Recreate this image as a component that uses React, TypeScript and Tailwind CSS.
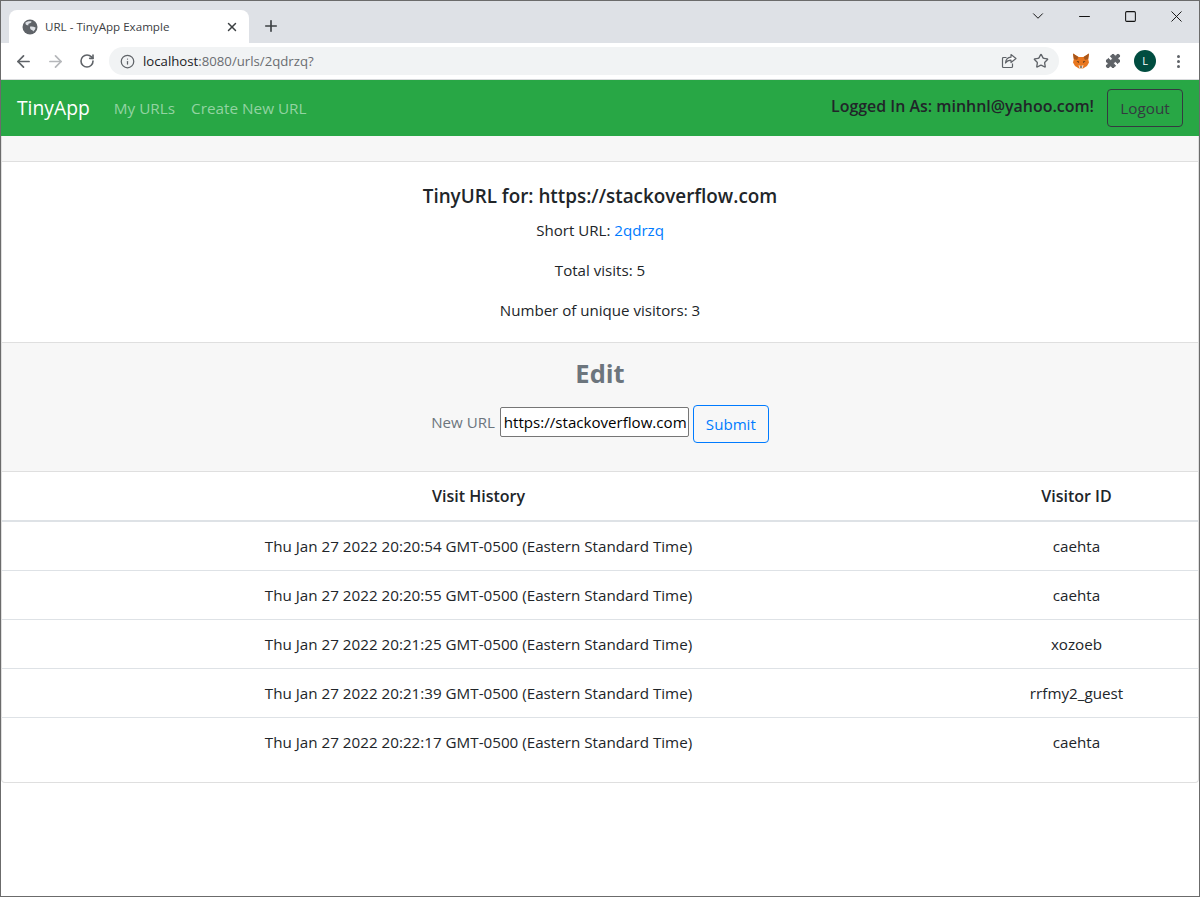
import { ArrowLeft, ArrowRight, RotateCw, Info, Star, X, Plus, ChevronDown, Minus, Square, Puzzle } from "lucide-react";

const visits = [
  ["Thu Jan 27 2022 20:20:54 GMT-0500 (Eastern Standard Time)", "caehta"],
  ["Thu Jan 27 2022 20:20:55 GMT-0500 (Eastern Standard Time)", "caehta"],
  ["Thu Jan 27 2022 20:21:25 GMT-0500 (Eastern Standard Time)", "xozoeb"],
  ["Thu Jan 27 2022 20:21:39 GMT-0500 (Eastern Standard Time)", "rrfmy2_guest"],
  ["Thu Jan 27 2022 20:22:17 GMT-0500 (Eastern Standard Time)", "caehta"],
];

// metamask fox
function Fox() {
  return (
    <svg width="18" height="18" viewBox="0 0 18 18">
      <path d="M1 1.500l5.500 3.500h5L17 1.500l-.8 5.500.8 3.500-2 3.500-4 2.500H7l-4-2.500-2-3.500.8-3.500z" fill="#e8761e" />
      <path d="M1 1.500L6.500 5 5 8 1.800 7zM17 1.500L11.500 5 13 8l3.200-1z" fill="#a8561a" />
      <path d="M4.500 9l2.500.4-.3 1.600zM13.500 9l-2.500.4.3 1.600z" fill="#4a2f14" />
      <path d="M6.500 13l2.500 1 2.500-1-.8 3.500H7.300z" fill="#f0dcc6" />
      <path d="M8 14.500h2v1H8z" fill="#2f2a26" />
    </svg>
  );
}

function GlobeFavicon() {
  return (
    <svg width="16" height="16" viewBox="0 0 16 16">
      <circle cx="8" cy="8" r="7.500" fill="#5f6368" />
      <path d="M3.500 3.500c2-1.400 4.500-1.600 6-1 .2 1.200-1.200 1.700-2.400 2-.8.2-1 1-.5 1.700-1 .4-2.400-.2-3.100-1.200zM8.200 7.600c1.600-.5 3.600.1 5.400 1-.2 1.500-1 2.900-2.400 3.900-.4-1-1.200-1.400-2-1.700-.9-.4-1.500-2.200-1-3.200z" fill="#dee1e6" />
    </svg>
  );
}

function ShareIcon() {
  return (
    <svg width="16" height="16" viewBox="0 0 16 16" fill="none" stroke="#5f6368" strokeWidth="1.2">
      <path d="M11.500 10.500v3a1 1 0 0 1-1 1h-8a1 1 0 0 1-1-1v-8a1 1 0 0 1 1-1h3" />
      <path d="M10 1.500l5 4-5 4V7.200c-2.600 0-4.300.9-5.500 2.800.3-3.300 2.300-5.500 5.500-5.800z" fill="#fff" strokeLinejoin="round" />
    </svg>
  );
}

function Chrome() {
  return (
    <div className="shrink-0">
      {/* tab strip */}
      <div className="flex h-[42px] items-end bg-[#dee1e6] pl-[8px]">
        <div className="flex h-[33px] w-[240px] items-center rounded-t-[8px] bg-white pl-[13px] pr-[10px]">
          <GlobeFavicon />
          <span className="ml-[7px] text-[11.6px] text-[#3c4043]">URL - TinyApp Example</span>
          <X className="ml-auto h-[14px] w-[14px] text-[#3c4043]" strokeWidth={2.5} />
        </div>
        <Plus className="mb-[8px] ml-[13px] h-[18px] w-[18px] text-[#3c4043]" strokeWidth={2.2} />
        <div className="ml-auto flex h-full items-start">
          <div className="flex h-[30px] w-[46px] items-center justify-center"><ChevronDown className="h-[18px] w-[18px] text-[#111]" strokeWidth={1.3} /></div>
          <div className="flex h-[30px] w-[46px] items-center justify-center"><Minus className="h-[17px] w-[17px] text-[#111]" strokeWidth={1.4} /></div>
          <div className="flex h-[30px] w-[46px] items-center justify-center"><Square className="h-[13px] w-[13px] text-[#111]" strokeWidth={1.9} /></div>
          <div className="flex h-[30px] w-[46px] items-center justify-center"><X className="h-[19px] w-[19px] text-[#111]" strokeWidth={1.2} /></div>
        </div>
      </div>
      {/* toolbar */}
      <div className="flex h-[37px] items-center border-b border-[#d8dadc] bg-white pl-[13px] pr-[10px]">
        <ArrowLeft className="h-[19px] w-[19px] text-[#5f6368]" strokeWidth={2.2} />
        <ArrowRight className="ml-[13px] h-[19px] w-[19px] text-[#b5b7ba]" strokeWidth={2.2} />
        <RotateCw className="ml-[14px] h-[16px] w-[16px] text-[#5f6368]" strokeWidth={2.4} />
        <div className="ml-[14px] flex h-[28px] w-[950px] items-center rounded-full bg-[#f1f3f4] pl-[11px] pr-[10px]">
          <Info className="h-[15px] w-[15px] text-[#5f6368]" strokeWidth={2} />
          <span className="ml-[8px] mt-[2px] text-[13.2px] text-[#6a6d71]"><span className="text-[#202124]">localhost</span>:8080/urls/2qdrzq?</span>
          <div className="ml-auto"><ShareIcon /></div>
          <Star className="ml-[16px] h-[16px] w-[16px] text-[#5f6368]" strokeWidth={2} />
        </div>
        <div className="ml-[13px]"><Fox /></div>
        <Puzzle className="ml-[15px] h-[16px] w-[16px] fill-[#5f6368] text-[#5f6368]" strokeWidth={1.5} />
        <div className="ml-[13px] flex h-[22px] w-[22px] items-center justify-center rounded-full bg-[#004d40] text-[11px] text-white">L</div>
        <div className="ml-[21px] flex flex-col gap-[2px]">
          <span className="h-[3px] w-[3px] rounded-full bg-[#5f6368]" />
          <span className="h-[3px] w-[3px] rounded-full bg-[#5f6368]" />
          <span className="h-[3px] w-[3px] rounded-full bg-[#5f6368]" />
        </div>
      </div>
    </div>
  );
}

export default function App() {
  return (
    <div className="flex h-[897px] w-[1200px] flex-col overflow-hidden border border-[#6b6b6b] bg-white font-['Open_Sans','Noto_Sans',sans-serif] text-[16px] text-[#212529]">
      <Chrome />
      {/* navbar */}
      <nav className="flex h-[56px] shrink-0 items-center bg-[#28a745] pl-[16px] pr-[16px]">
        <span className="text-[19.3px] text-white">TinyApp</span>
        <span className="ml-[24px] text-[15.3px] text-[#93d3a2]">My URLs</span>
        <span className="ml-[16px] text-[15.3px] text-[#93d3a2]">Create New URL</span>
        <b className="mb-[3px] ml-auto text-[15.95px] font-semibold text-[#212529]">Logged In As: minhnl@yahoo.com!</b>
        <button className="ml-[13px] h-[38px] w-[76px] rounded-[4px] border border-[#343a40] text-[15.3px] text-[#343a40]">Logout</button>
      </nav>
      {/* card */}
      <main className="flex h-[647px] flex-col rounded-b-[4px] border-b border-l border-r border-[#dfdfdf]">
        <div className="h-[26px] shrink-0 border-b border-[#dfdfdf] bg-[#f7f7f7]" />
        <section className="flex h-[180px] shrink-0 flex-col items-center pt-[20px]">
          <h5 className="text-[18.85px] font-semibold leading-[28px]">TinyURL for: https://stackoverflow.com</h5>
          <p className="mt-[8px] text-[15.1px] leading-[24px]">Short URL: <a className="text-[#007bff]">2qdrzq</a></p>
          <p className="mt-[16px] text-[15.1px] leading-[24px]">Total visits: 5</p>
          <p className="mt-[16px] text-[15.1px] leading-[24px]">Number of unique visitors: 3</p>
        </section>
        <section className="flex h-[130px] shrink-0 flex-col items-center border-b border-t border-[#dfdfdf] bg-[#f7f7f7] pt-[11px]">
          <h3 className="text-[25.5px] font-bold leading-[38px] text-[#6c757d]">Edit</h3>
          <form className="mt-[9px] flex items-center">
            <label className="text-[15.1px] text-[#6c757d]">New URL</label>
            <input readOnly value="https://stackoverflow.com" className="ml-[5px] h-[30px] w-[189px] rounded-[2px] border border-[#767676] bg-white pl-[3px] text-[15.1px] text-black" />
            <button type="button" className="ml-[4px] mt-[4px] h-[38px] w-[76px] rounded-[4px] border border-[#007bff] text-[15.1px] text-[#007bff]">Submit</button>
          </form>
        </section>
        <table className="w-full table-fixed text-center text-[15.2px]">
          <thead>
            <tr className="h-[49px] border-b-2 border-[#dee2e6] text-[16px]">
              <th className="w-[953px] font-semibold">Visit History</th>
              <th className="font-semibold">Visitor ID</th>
            </tr>
          </thead>
          <tbody>
            {visits.map(([date, id], i) => (
              <tr key={i} className="h-[49px] border-b border-[#dee2e6] last:border-b-0">
                <td className="pt-[2px]">{date}</td>
                <td className="pt-[2px]">{id}</td>
              </tr>
            ))}
          </tbody>
        </table>
      </main>
    </div>
  );
}
